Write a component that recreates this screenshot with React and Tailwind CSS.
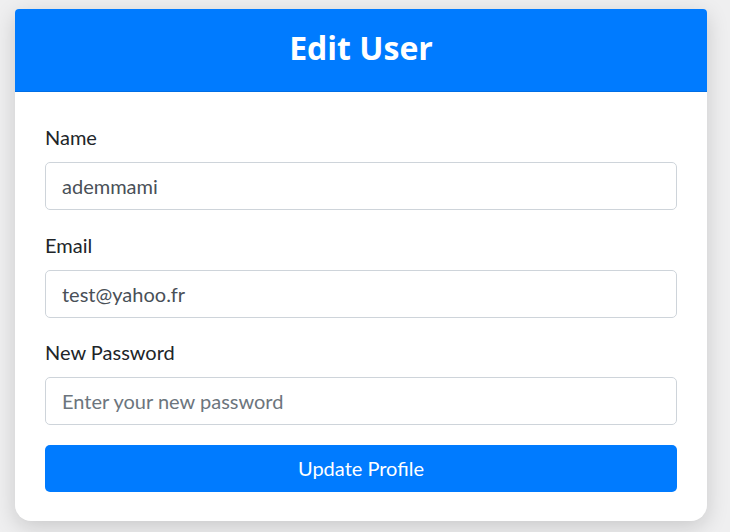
import React, { useState } from 'react';

const bodyFont = { fontFamily: 'Lato, "Open Sans", sans-serif' };

function Field({ label, type, value, placeholder, onChange }) {
    return (
        <div className="mb-[19.5px]">
            <label className="block text-[20px] leading-[30px] text-[#212529] mb-[10px]" style={bodyFont}>{label}</label>
            <input
                type={type}
                value={value}
                placeholder={placeholder}
                onChange={onChange}
                style={bodyFont}
                className="block w-full h-[48px] px-4 text-[20px] text-[#495057] placeholder:text-[#6c757d] bg-white border border-[#ced4da] rounded-[5px] outline-none"
            />
        </div>
    );
}

export default function App() {
    const [form, setForm] = useState({ name: 'ademmami', email: 'test@yahoo.fr', password: '' });

    return (
        <div className="min-h-[532px] bg-[#efeff0] pt-[9px] pl-[15px]" style={{ fontFamily: '"Open Sans", "Noto Sans", sans-serif' }}>
            <div className="w-[692px] bg-white rounded-t-[4px] rounded-b-[16px] overflow-hidden shadow-[0_6px_22px_rgba(0,0,0,0.16)]">
                <div className="h-[83px] pb-[5px] bg-[#007bff] border-b border-black/10 flex items-center justify-center">
                    <h2 className="text-[32px] font-bold text-white leading-tight">Edit User</h2>
                </div>
                <form className="px-[30px] pt-[30px] pb-[29px]" onSubmit={(e) => e.preventDefault()}>
                    <Field label="Name" type="text" value={form.name} onChange={(e) => setForm({ ...form, name: e.target.value })} />
                    <Field label="Email" type="email" value={form.email} onChange={(e) => setForm({ ...form, email: e.target.value })} />
                    <Field label="New Password" type="password" value={form.password} placeholder="Enter your new password" onChange={(e) => setForm({ ...form, password: e.target.value })} />
                    <button type="submit" style={bodyFont} className="block w-full h-[47px] bg-[#007bff] text-white text-[20px] rounded-[5px]">
                        Update Profile
                    </button>
                </form>
            </div>
        </div>
    );
}
